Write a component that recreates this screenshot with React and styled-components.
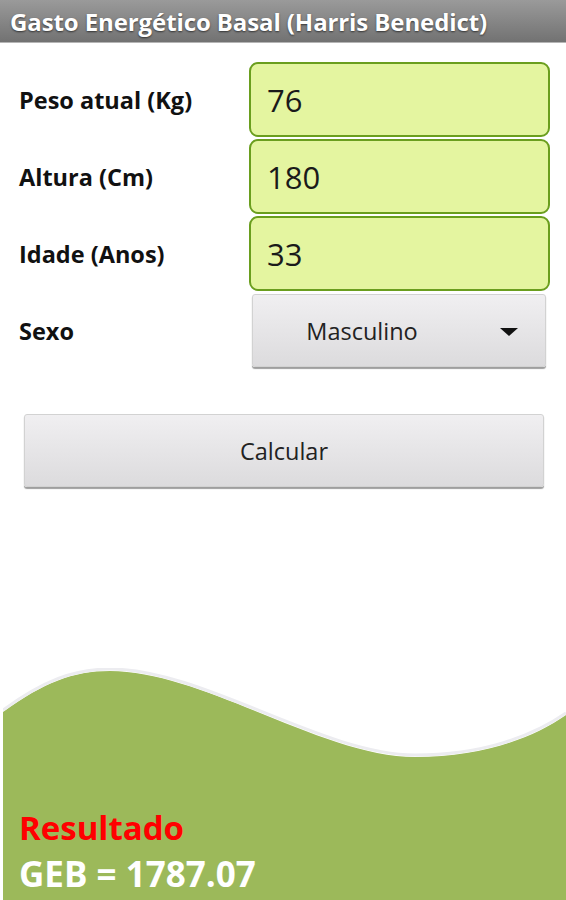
import React from "react";
import styled, { createGlobalStyle } from "styled-components";

const Global = createGlobalStyle`
  html, body { margin: 0; padding: 0; background: #fff; }
  body { font-family: "Open Sans", "Noto Sans", sans-serif; }
`;

const Page = styled.div`
  width: 566px;
  height: 900px;
  display: flex;
  flex-direction: column;
  overflow: hidden;
  background: #fff;
`;

const TitleBar = styled.header`
  height: 42px;
  flex: none;
  display: flex;
  align-items: center;
  padding-left: 10px;
  background: linear-gradient(#9a9a9a, #727272);
  border-bottom: 1px solid #b5b5b5;
  color: #fff;
  font-weight: 700;
  font-size: 24px;
  letter-spacing: -0.1px;
  text-shadow: 0 1px 2px rgba(0, 0, 0, 0.6);
  white-space: nowrap;
`;

const Form = styled.div`
  display: grid;
  grid-template-columns: 230px 301px;
  grid-auto-rows: 75px;
  row-gap: 2px;
  padding: 19px 0 0 19px;
  align-items: center;
`;

const Label = styled.label`
  font-weight: 700;
  font-size: 23.5px;
  color: #111;
  white-space: nowrap;
`;

const Field = styled.div`
  box-sizing: border-box;
  height: 75px;
  display: flex;
  align-items: center;
  padding-left: 16px;
  background: #e4f5a0;
  border: 2.5px solid #6a9e1e;
  border-radius: 9px;
  font-size: 31px;
  color: #1a1a1a;
`;

const Spinner = styled.div`
  box-sizing: border-box;
  height: 73px;
  margin: 0 4px 0 3px;
  position: relative;
  display: flex;
  align-items: center;
  justify-content: center;
  padding-right: 74px;
  background: linear-gradient(#f0eff1, #dcdbdd);
  border: 1px solid #d2d2d2;
  border-radius: 3px;
  box-shadow: 0 2px 1px #9e9e9e;
  font-size: 23.5px;
  color: #222;
`;

const Arrow = styled.span`
  position: absolute;
  right: 27px;
  top: 50%;
  margin-top: -3px;
  width: 0;
  height: 0;
  border-left: 9px solid transparent;
  border-right: 9px solid transparent;
  border-top: 8px solid #111;
`;

const Button = styled.button`
  box-sizing: border-box;
  margin: 46px 22px 0 24px;
  height: 73px;
  background: linear-gradient(#f0eff1, #dcdbdd);
  border: 1px solid #d2d2d2;
  border-radius: 3px;
  box-shadow: 0 2px 1px #9e9e9e;
  font-family: inherit;
  font-size: 23.5px;
  color: #222;
`;

const Footer = styled.footer`
  margin-top: auto;
  margin-left: 3px;
  display: flex;
  flex-direction: column;
`;

const Wave = styled.svg`
  display: block;
  width: 563px;
  height: 92px;
`;

const ResultPanel = styled.div`
  background: #9cb95a;
  height: 140px;
  box-sizing: border-box;
  padding: 48px 0 0 16px;
  display: flex;
  flex-direction: column;
  font-weight: 700;
`;

const ResultTitle = styled.div`
  color: #ff0000;
  font-size: 33px;
  line-height: 40px;
`;

const ResultValue = styled.div`
  color: #fff;
  font-size: 35px;
  line-height: 52px;
`;

const rows = [
  { label: "Peso atual (Kg)", value: "76" },
  { label: "Altura (Cm)", value: "180" },
  { label: "Idade (Anos)", value: "33" },
];

export default function App() {
  return (
    <Page>
      <Global />
      <TitleBar>Gasto Energético Basal (Harris Benedict)</TitleBar>
      <Form>
        {rows.map((r) => (
          <React.Fragment key={r.label}>
            <Label>{r.label}</Label>
            <Field>{r.value}</Field>
          </React.Fragment>
        ))}
        <Label>Sexo</Label>
        <Spinner>
          Masculino
          <Arrow />
        </Spinner>
      </Form>
      <Button>Calcular</Button>
      <Footer>
        <Wave viewBox="0 0 563 92" preserveAspectRatio="none">
          <path
            d="M0,44 C40,15 70,3 107,3 C200,3 320,89 412,89 C480,89 530,70 563,47 L563,92 L0,92 Z"
            fill="#9cb95a"
          />
          <path
            d="M0,44 C40,15 70,3 107,3 C200,3 320,89 412,89 C480,89 530,70 563,47"
            fill="none"
            stroke="#ececf0"
            strokeWidth="3"
            transform="translate(0,-2)"
          />
        </Wave>
        <ResultPanel>
          <ResultTitle>Resultado</ResultTitle>
          <ResultValue>GEB = 1787.07</ResultValue>
        </ResultPanel>
      </Footer>
    </Page>
  );
}
